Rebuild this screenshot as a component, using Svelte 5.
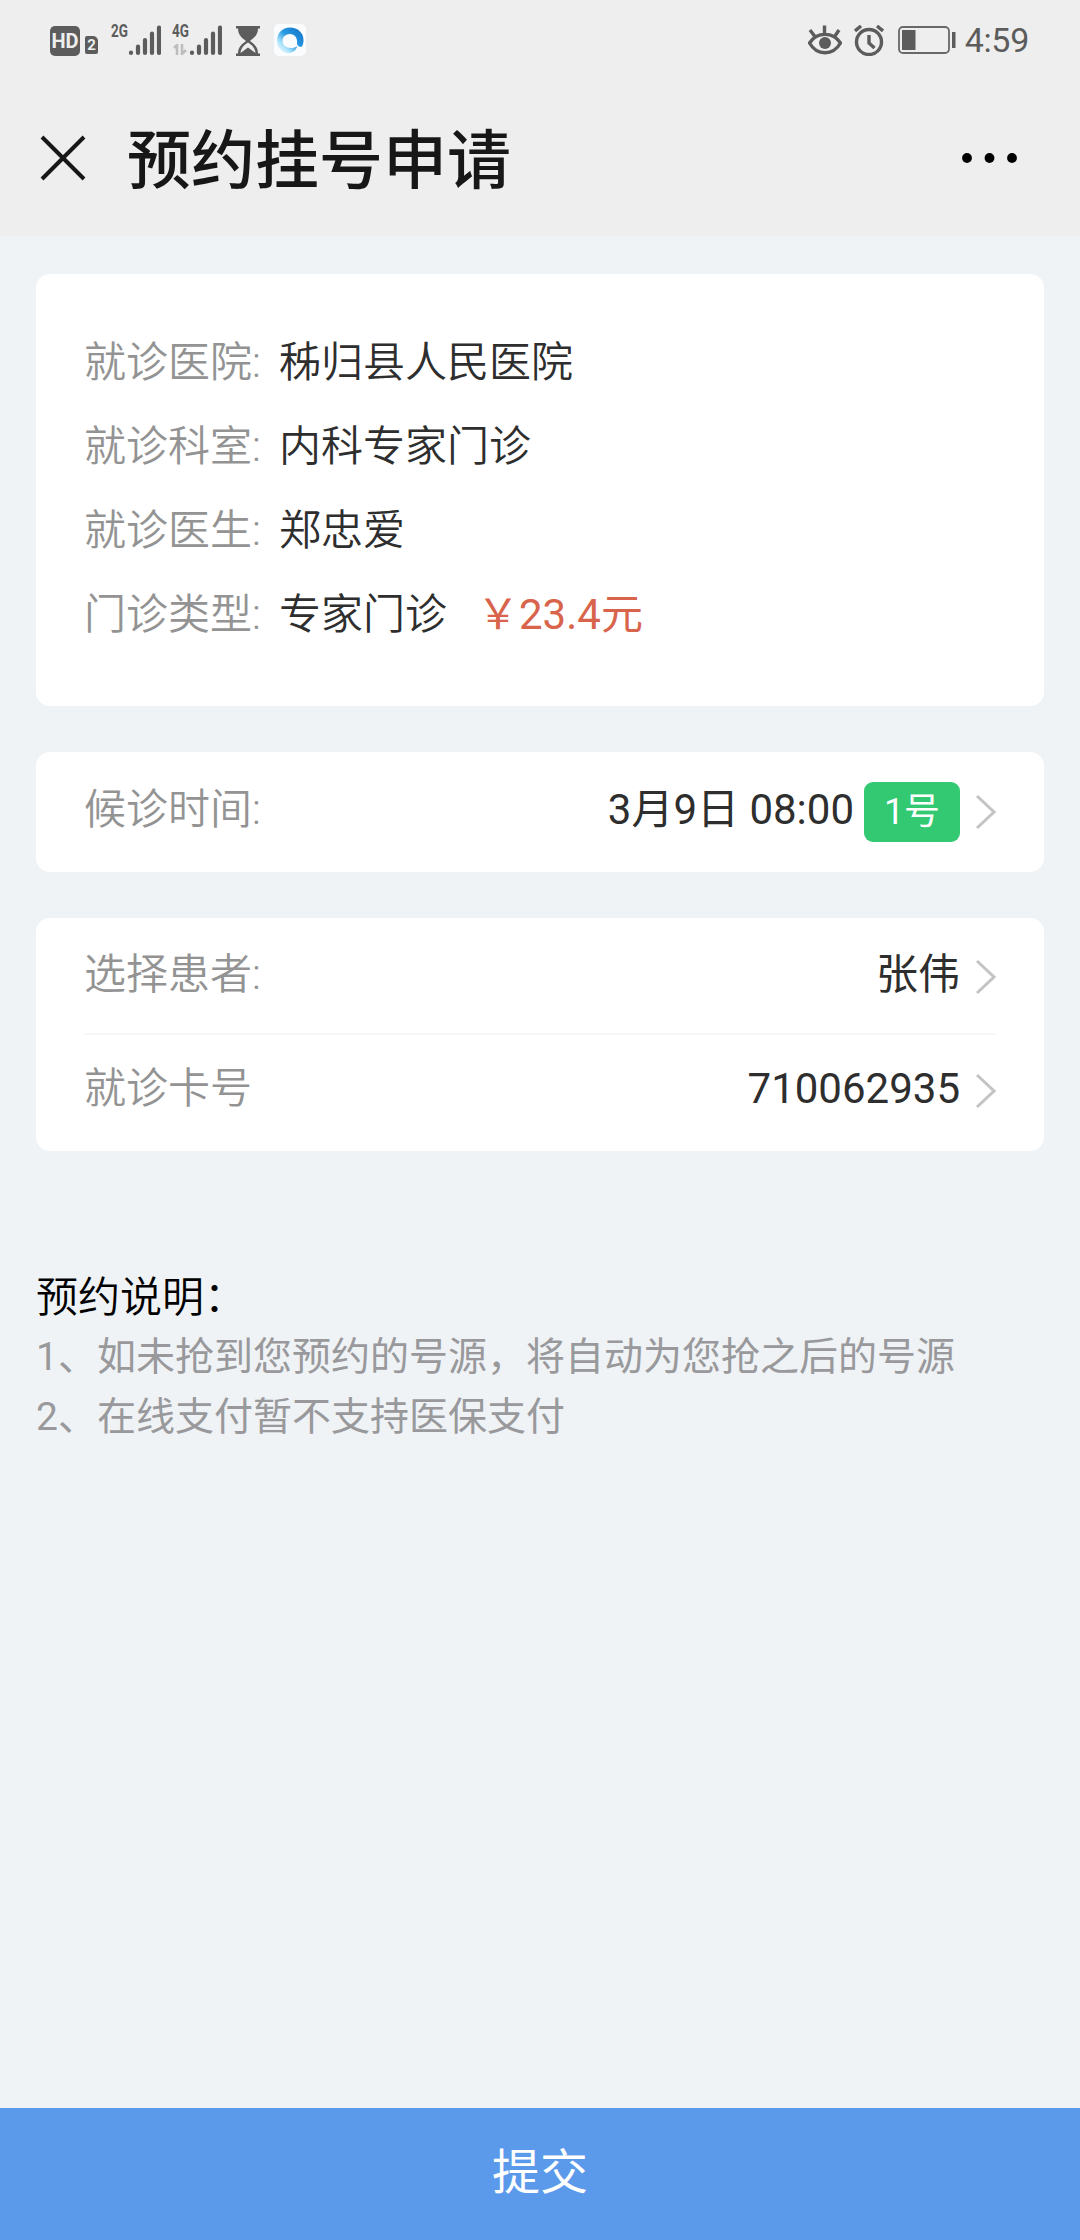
<script lang="ts">
    type Info = { label: string; value: string; price?: string };

    const visit: Info[] = [
        { label: "就诊医院:", value: "秭归县人民医院" },
        { label: "就诊科室:", value: "内科专家门诊" },
        { label: "就诊医生:", value: "郑忠爱" },
        { label: "门诊类型:", value: "专家门诊", price: "￥23.4元" },
    ];

    const patient: Info[] = [
        { label: "选择患者:", value: "张伟" },
        { label: "就诊卡号", value: "710062935" },
    ];

    const notes = [
        "1、如未抢到您预约的号源，将自动为您抢之后的号源",
        "2、在线支付暂不支持医保支付",
    ];
</script>

{#snippet bars()}
    <svg class="bars" width="33" height="32" viewBox="0 0 33 32">
        <path
            d="M3 28.500v.5M10 22.500V29M17 16V29M24 9.500V29M31 3.500V29"
            stroke="#5c5c5c"
            stroke-width="4.200"
            stroke-linecap="round"
        />
    </svg>
{/snippet}

{#snippet chevron()}
    <svg class="chevron" width="21" height="36" viewBox="0 0 21 36">
        <path d="M2 2l17 16L2 34" fill="none" stroke="#c4c4c4" stroke-width="3" />
    </svg>
{/snippet}

<div class="page">
    <header>
        <div class="status">
            <div class="status-left">
                <span class="hd">HD</span>
                <span class="sim">2</span>
                <span class="signal">
                    <span class="net">2G</span>
                    {@render bars()}
                </span>
                <span class="signal second">
                    <span class="net">4G</span>
                    <svg class="traffic" width="14" height="11" viewBox="0 0 14 11">
                        <path d="M1 4l3-3v10M9 0v10l4-4" fill="none" stroke="#bdbdbd" stroke-width="2.500" />
                    </svg>
                    {@render bars()}
                </span>
                <svg class="hourglass" width="24" height="30" viewBox="0 0 24 30">
                    <path d="M0 0h24v2.500h-2C22 9 18 12 14 15c4 3 8 6 8 12.500h2V30H0v-2.500h2C2 21 6 18 10 15 6 12 2 9 2 2.500H0z" fill="#5c5c5c" />
                    <path d="M4.500 27C5 22 8 19 12 16.500 16 19 19 22 19.500 27L12 21.500z" fill="#eee" />
                </svg>
                <svg class="browser" width="32" height="32" viewBox="0 0 32 32">
                    <defs>
                        <linearGradient id="ring" x1="0.900" y1="0.300" x2="0.200" y2="1">
                            <stop offset="0" stop-color="#1b80d0" />
                            <stop offset="0.400" stop-color="#2b9ce4" />
                            <stop offset="0.750" stop-color="#a8e2fb" />
                            <stop offset="1" stop-color="#e4f7ff" />
                        </linearGradient>
                    </defs>
                    <rect width="32" height="32" rx="5" fill="#fafcfd" />
                    <path d="M16 3.500C24 3.500 29.500 9 29.500 16c0 3-.5 5-2 7-2 0-4-1-4.500-3 1-6-2.500-10-7-10s-7.500 3-7.500 7c0 4 4 7 8 7 3 0 5-.5 7-2-2 5-5 7-9 7C8.500 29 3 24 3 16.500S8.500 3.500 16 3.500z" fill="url(#ring)" />
                </svg>
            </div>
            <div class="status-right">
                <svg width="34" height="30" viewBox="0 0 34 30" fill="none" stroke="#5c5c5c" stroke-width="3.400">
                    <path d="M1.500 18C9 6.500 25 6.500 32.500 18 25 31 9 31 1.500 18zM16.500 8V.5M6.500 11L2 5M27 11l4-6" />
                    <circle cx="17" cy="18" r="6" fill="#5c5c5c" stroke="none" />
                </svg>
                <svg width="30" height="31" viewBox="0 0 30 31" fill="none" stroke="#5c5c5c" stroke-width="3.400">
                    <circle cx="15" cy="17" r="12.500" />
                    <path d="M1 6l6-5M29 6l-6-5M15 10v8l5.500 5" />
                </svg>
                <svg class="battery" width="58" height="28" viewBox="0 0 58 28">
                    <rect x="1" y="1" width="50" height="26" rx="4" fill="none" stroke="#686868" stroke-width="1.800" />
                    <path d="M4 4h13.500v20H4zM54 6h3.500v16H54z" fill="#5c5c5c" />
                </svg>
                <span class="clock">4:59</span>
            </div>
        </div>
        <div class="nav">
            <svg width="46" height="46" viewBox="0 0 46 46">
                <path d="M2 2l42 42M44 2L2 44" stroke="#171717" stroke-width="4" />
            </svg>
            <h1>预约挂号申请</h1>
            <svg class="more" width="56" height="10" viewBox="0 0 56 10">
                <circle cx="5" cy="5" r="4.900" />
                <circle cx="27.500" cy="5" r="4.900" />
                <circle cx="50" cy="5" r="4.900" />
            </svg>
        </div>
    </header>

    <main>
        <section class="card visit">
            {#each visit as item}
                <div class="info">
                    <span class="label">{item.label}</span>
                    <span class="value">{item.value}</span>
                    {#if item.price}
                        <span class="price">{item.price}</span>
                    {/if}
                </div>
            {/each}
        </section>

        <section class="card time">
            <div class="row">
                <span class="label">候诊时间:</span>
                <span class="value">3月9日 08:00</span>
                <span class="badge">1号</span>
                {@render chevron()}
            </div>
        </section>

        <section class="card patient">
            {#each patient as item}
                <div class="row">
                    <span class="label">{item.label}</span>
                    <span class="value">{item.value}</span>
                    {@render chevron()}
                </div>
            {/each}
        </section>

        <div class="notes">
            <h2>预约说明：</h2>
            {#each notes as note}
                <p>{note}</p>
            {/each}
        </div>
    </main>

    <button class="submit">提交</button>
</div>

<style>
    :global(body) {
        background: #eff3f6;
    }

    .page {
        display: flex;
        flex-direction: column;
        width: 1080px;
        height: 2240px;
        background: #eff3f6;
        color: #2e2e2e;
        font-family: Roboto, "Noto Sans CJK SC", sans-serif;
        font-size: 42px;
    }

    svg {
        display: block;
        flex: none;
    }

    header {
        height: 236px;
        background: #eeeeee;
    }

    .status {
        display: flex;
        justify-content: space-between;
        height: 80px;
        padding: 0 51px 0 50px;
        box-sizing: border-box;
        color: #5c5c5c;
    }

    .status-left {
        display: flex;
        align-items: flex-end;
        height: 56px;
    }

    .hd {
        width: 30px;
        height: 30px;
        border-radius: 5px;
        background: #5c5c5c;
        color: #eee;
        font-size: 20px;
        font-weight: 700;
        line-height: 31px;
        text-align: center;
    }

    .sim {
        width: 13px;
        height: 18px;
        margin: 0 0 2px 5px;
        border-radius: 2px 5px 2px 2px;
        background: #5c5c5c;
        color: #eee;
        font-size: 15px;
        font-weight: 700;
        line-height: 19px;
        text-align: center;
    }

    .signal {
        position: relative;
        display: flex;
        justify-content: flex-end;
        width: 50px;
        margin-left: 13px;
    }

    .signal.second {
        margin-left: 11px;
    }

    .net {
        position: absolute;
        left: 0;
        top: 0;
        font-size: 18px;
        font-weight: 700;
        line-height: 14px;
        transform: scaleX(0.75);
        transform-origin: left;
    }

    .traffic {
        position: absolute;
        left: 1px;
        bottom: 1px;
    }

    .hourglass {
        margin-left: 14px;
    }

    .browser {
        margin-left: 14px;
    }

    .status-right {
        display: flex;
        align-items: center;
        height: 80px;
    }

    .status-right svg + svg {
        margin-left: 12px;
    }

    .status-right .battery {
        margin-left: 14px;
    }

    .clock {
        margin-left: 9px;
        font-size: 34px;
        letter-spacing: -0.3px;
    }

    .nav {
        display: flex;
        align-items: center;
        height: 156px;
        padding: 0 62px 0 40px;
        box-sizing: border-box;
    }

    h1 {
        flex: 1;
        margin: 0 0 0 41px;
        padding-top: 8px;
        color: #171717;
        font-size: 64px;
        font-weight: 500;
        line-height: 80px;
    }

    main {
        flex: 1;
        padding: 38px 36px 0;
    }

    .card {
        padding: 0 48px;
        border-radius: 14px;
        background: #fff;
    }

    .visit {
        height: 432px;
        padding-top: 47px;
        box-sizing: border-box;
    }

    .info {
        display: flex;
        height: 84px;
        line-height: 84px;
    }

    .info .label {
        width: 195px;
    }

    .label,
    .info .value,
    h2 {
        font-weight: 350;
    }

    .label {
        color: #939393;
    }

    .price {
        margin-left: 30px;
        color: #d9644c;
    }

    .time {
        margin-top: 46px;
    }

    .row {
        display: flex;
        align-items: center;
        height: 120px;
    }

    .row .label {
        flex: 1;
    }

    .row .label,
    .row .value {
        line-height: 60px;
        padding-bottom: 4px;
    }

    .badge {
        width: 96px;
        height: 60px;
        margin-left: 10px;
        border-radius: 9px;
        background: #33c973;
        color: #fff;
        font-size: 36px;
        line-height: 60px;
        text-align: center;
    }

    .chevron {
        margin-left: 15px;
    }

    .patient {
        margin-top: 46px;
    }

    .patient .row {
        height: 115px;
        padding-top: 2px;
        box-sizing: border-box;
    }

    .patient .row + .row {
        height: 118px;
        border-top: 2px solid #f7f7f7;
        padding: 0 0 4px;
    }

    .notes {
        margin-top: 118px;
    }

    h2 {
        margin: 0;
        color: #000;
        font-size: 42px;
        line-height: 58px;
    }

    p {
        margin: 0;
        color: #99999c;
        font-size: 39px;
        line-height: 60px;
        white-space: nowrap;
    }

    .submit {
        height: 132px;
        padding: 0 0 12px;
        border: 0;
        background: #5b99eb;
        color: #fff;
        font: inherit;
        font-size: 48px;
    }
</style>
